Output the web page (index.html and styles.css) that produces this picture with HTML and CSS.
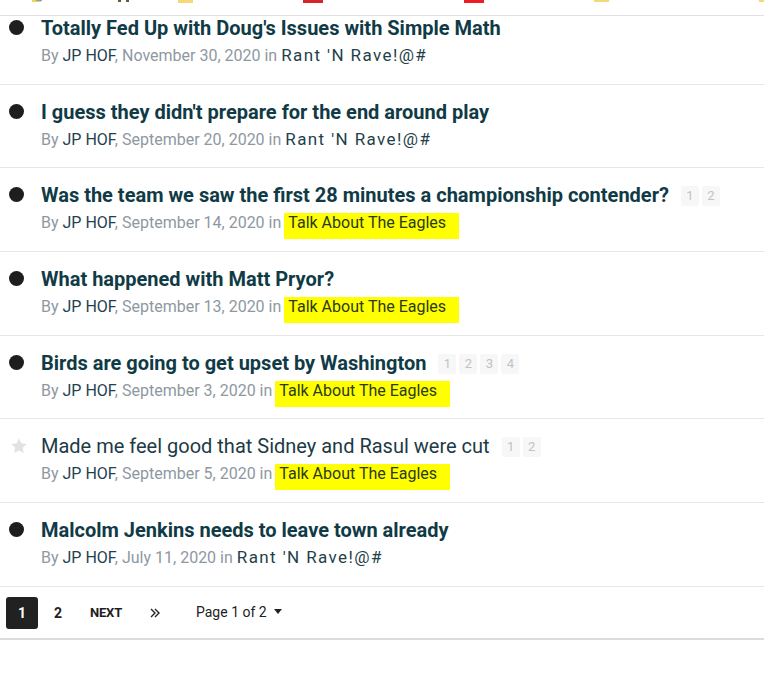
FILE: index.html
```html
<!DOCTYPE html>
<html>
<head>
<meta charset="utf-8">
<link rel="stylesheet" href="styles.css">
</head>
<body>
<div class="topstrip">
  <svg class="remnants" width="764" height="15" viewBox="0 0 764 15">
    <rect x="32" y="0" width="9" height="2" fill="#f3d25a"/>
    <rect x="36" y="0" width="6" height="1" fill="#7aa0d8"/>
    <rect x="118" y="0" width="3" height="2" fill="#6b5a3a"/>
    <rect x="126" y="0" width="3" height="2" fill="#6b5a3a"/>
    <rect x="178" y="0" width="15" height="3" fill="#f6d77a"/>
    <rect x="303" y="0" width="20" height="3" fill="#d8232a"/>
    <rect x="464" y="0" width="20" height="3" fill="#ee1c25"/>
    <rect x="594" y="0" width="15" height="2" fill="#f6d77a"/>
    <rect x="759" y="0" width="5" height="2" fill="#f6d77a"/>
  </svg>
</div>
<ul class="topics">
  <li class="row first">
    <span class="dot"></span>
    <div class="body">
      <div class="title"><a class="tlink">Totally Fed Up with Doug's Issues with Simple Math</a></div>
      <div class="meta">By <span class="author">JP HOF</span>, November 30, 2020 in <span class="forum rant">Rant 'N Rave!@#</span></div>
    </div>
  </li>
  <li class="row">
    <span class="dot"></span>
    <div class="body">
      <div class="title"><a class="tlink">I guess they didn't prepare for the end around play</a></div>
      <div class="meta">By <span class="author">JP HOF</span>, September 20, 2020 in <span class="forum rant">Rant 'N Rave!@#</span></div>
    </div>
  </li>
  <li class="row">
    <span class="dot"></span>
    <div class="body">
      <div class="title"><a class="tlink">Was the team we saw the first 28 minutes a championship contender?</a><span class="pages"><span class="pg">1</span><span class="pg">2</span></span></div>
      <div class="meta">By <span class="author">JP HOF</span>, September 14, 2020 in <span class="forum hl">Talk About The Eagles</span></div>
    </div>
  </li>
  <li class="row">
    <span class="dot"></span>
    <div class="body">
      <div class="title"><a class="tlink">What happened with Matt Pryor?</a></div>
      <div class="meta">By <span class="author">JP HOF</span>, September 13, 2020 in <span class="forum hl">Talk About The Eagles</span></div>
    </div>
  </li>
  <li class="row">
    <span class="dot"></span>
    <div class="body">
      <div class="title"><a class="tlink">Birds are going to get upset by Washington</a><span class="pages"><span class="pg">1</span><span class="pg">2</span><span class="pg">3</span><span class="pg">4</span></span></div>
      <div class="meta">By <span class="author">JP HOF</span>, September 3, 2020 in <span class="forum hl">Talk About The Eagles</span></div>
    </div>
  </li>
  <li class="row read">
    <svg class="star" width="18" height="18" viewBox="0 0 24 24"><path d="M12 1.8l3.1 6.6 7.2.9-5.3 5 1.4 7.1L12 17.9l-6.4 3.5L7 14.3 1.7 9.3l7.2-.9z" fill="#e2e2e2"/></svg>
    <div class="body">
      <div class="title"><a class="tlink">Made me feel good that Sidney and Rasul were cut</a><span class="pages"><span class="pg">1</span><span class="pg">2</span></span></div>
      <div class="meta">By <span class="author">JP HOF</span>, September 5, 2020 in <span class="forum hl">Talk About The Eagles</span></div>
    </div>
  </li>
  <li class="row">
    <span class="dot"></span>
    <div class="body">
      <div class="title"><a class="tlink">Malcolm Jenkins needs to leave town already</a></div>
      <div class="meta">By <span class="author">JP HOF</span>, July 11, 2020 in <span class="forum rant">Rant 'N Rave!@#</span></div>
    </div>
  </li>
</ul>
<div class="pagination">
  <span class="pbtn active">1</span>
  <span class="pbtn">2</span>
  <span class="pnext">NEXT</span>
  <svg class="plast" width="10" height="10" viewBox="0 0 10 10"><path d="M1 1l4 4-4 4M5 1l4 4-4 4" fill="none" stroke="#222" stroke-width="1.4"/></svg>
  <span class="pjump">Page 1 of 2 <span class="caret"></span></span>
</div>
</body>
</html>
```

FILE: styles.css
```css
* { box-sizing: border-box; }
html, body { margin: 0; padding: 0; background: #fff; }
body { font-family: Roboto, "Liberation Sans", sans-serif; width: 764px; overflow: hidden; }

.topstrip { height: 16px; border-bottom: 1px solid #e0e0e0; }
.remnants { display: block; }

.topics { list-style: none; margin: 0; padding: 0; }
.row {
  display: flex;
  align-items: flex-start;
  padding: 15px 0 16.67px 0;
  border-bottom: 1px solid #e6e6e6;
}
.row.first { padding-top: 0; }

.dot {
  flex: none;
  width: 15px; height: 15px;
  border-radius: 50%;
  background: #1e1e1e;
  margin: 4px 17px 0 9px;
}
.star { flex: none; margin: 3px 13px 0 10px; }

.body { flex: 1; min-width: 0; }
.title {
  display: flex;
  align-items: center;
  height: 24px;
  font-size: 20px;
  line-height: 24px;
  font-weight: 700;
  color: #103b46;
  white-space: nowrap;
}
.tlink { color: #103b46; }
.read .title { font-weight: 400; }
.read .tlink { color: #1d3a46; }

.pages { display: inline-flex; gap: 3px; margin-left: 12px; margin-top: 2px; }
.pg {
  display: inline-block;
  width: 18px; height: 20px;
  line-height: 20px;
  text-align: center;
  background: #f7f7f7;
  color: #c2c2c2;
  font-size: 13px;
  font-weight: 400;
  border-radius: 2px;
}

.meta {
  margin-top: 5px;
  height: 22px;
  font-size: 16px;
  line-height: 22px;
  color: #8e98a2;
  white-space: nowrap;
}
.author { color: #1f4150; }
.forum { color: #1f3f4a; }
.rant { font-size: 17px; line-height: 16px; letter-spacing: 1.4px; }
.hl {
  background: #ffff00;
  color: #2b3a1a;
  padding: 0 13px 7px 4px;
  margin-left: -1px;
}

.pagination {
  display: flex;
  align-items: flex-start;
  height: 53px;
  padding: 10px 6px 0 6px;
  border-bottom: 2px solid #dcdcdc;
  font-size: 14px;
  color: #1e1e1e;
}
.pbtn {
  display: inline-block;
  width: 32px; height: 32px;
  line-height: 32px;
  text-align: center;
  font-weight: 700;
  font-size: 14px;
  border-radius: 3px;
}
.pbtn.active { background: #212121; color: #fff; }
.pbtn + .pbtn { margin-left: 4px; }
.pnext { font-weight: 700; font-size: 13px; margin-left: 16px; letter-spacing: -0.2px; line-height: 32px; }
.plast { flex: none; margin: 11px 0 0 28px; }
.pjump { margin-left: 36px; color: #222; display: inline-flex; align-items: center; height: 30px; }
.caret {
  display: inline-block;
  width: 0; height: 0;
  border-left: 4px solid transparent;
  border-right: 4px solid transparent;
  border-top: 5px solid #222;
  margin-left: 7px;
}
```
